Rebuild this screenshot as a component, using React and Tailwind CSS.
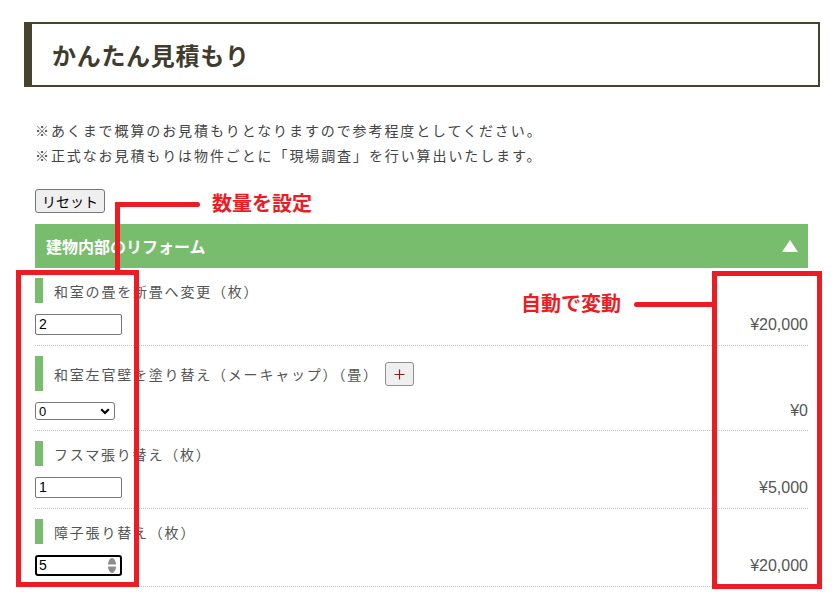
import React from "react";

function Item({ label, control, price, plus }) {
  return (
    <div className="pt-[10px] pb-[10px] border-b border-dotted border-[#c4c4c4]">
      <div className="min-h-[25px] border-l-[8px] border-[#78bc6e] pl-[11px] flex items-center gap-[6px] text-[14px] leading-[20px] tracking-[1.8px] text-[#555] font-['Noto_Sans_CJK_JP',sans-serif]">
        <span>{label}</span>
        {plus && (
          <button className="mt-[6px] mb-[5px] h-[24px] w-[29px] bg-[#efefef] border border-[#8f8f8f] rounded-[3px] flex items-center justify-center tracking-normal">
            <svg width="11" height="11" viewBox="0 0 11 11">
              <path d="M5.5 0.5V10.5M0.5 5.5H10.5" stroke="#7a2424" strokeWidth="1.2" />
            </svg>
          </button>
        )}
      </div>
      <div className="mt-[11px] flex items-center justify-between">
        {control}
        <span className="text-[16px] leading-none text-[#555] font-['Liberation_Sans',sans-serif]">{price}</span>
      </div>
    </div>
  );
}

function TextBox({ value }) {
  return (
    <input
      type="text"
      defaultValue={value}
      className="block h-[21px] w-[87px] border border-[#767676] rounded-[2px] pl-[3px] text-[14px] text-black bg-white font-['Liberation_Sans',sans-serif] outline-none"
    />
  );
}

export default function App() {
  return (
    <div className="relative w-[835px] h-[592px] overflow-hidden bg-white font-['Liberation_Sans','Noto_Sans_CJK_JP',sans-serif]">
      <div className="pt-[22px] pl-[24px] pr-[15px]">
        <div className="h-[65px] border-2 border-l-[8px] border-[#46432f] flex items-center pl-[20px]">
          <h1 className="text-[24px] font-bold leading-none tracking-[0.7px] text-[#3f3c2e] font-['Noto_Sans_CJK_JP',sans-serif]">
            かんたん見積もり
          </h1>
        </div>
        <div className="ml-[11px] mr-[12px]">
          <div className="mt-[31px] text-[14px] leading-[25px] tracking-[1.9px] text-[#444] font-['Noto_Sans_CJK_JP',sans-serif]">
            <p>※あくまで概算のお見積もりとなりますので参考程度としてください。</p>
            <p>※正式なお見積もりは物件ごとに「現場調査」を行い算出いたします。</p>
          </div>
          <button className="block mt-[21px] h-[24px] w-[70px] bg-[#efefef] border border-[#767676] rounded-[3px] text-[14px] text-black font-['Noto_Sans_CJK_JP',sans-serif] leading-none">
            リセット
          </button>
          <div className="mt-[11px] h-[44px] bg-[#78bc6e] flex items-center justify-between pl-[11px] pr-[10px]">
            <span className="text-white font-bold text-[16px] leading-none font-['Noto_Sans_CJK_JP',sans-serif]">
              建物内部のリフォーム
            </span>
            <svg width="16" height="12" viewBox="0 0 16 12">
              <polygon points="8,0 16,12 0,12" fill="#ffffff" />
            </svg>
          </div>

          <Item label="和室の畳を新畳へ変更（枚）" control={<TextBox value="2" />} price="¥20,000" />
          <Item
            label="和室左官壁を塗り替え（メーキャップ）（畳）"
            plus
            control={
              <div className="relative h-[18px] w-[80px]">
                <select
                  defaultValue="0"
                  className="appearance-none block h-[18px] w-[80px] border border-[#767676] rounded-[3px] pl-[3px] text-[13px] leading-none text-black bg-white font-['Liberation_Sans',sans-serif] outline-none"
                >
                  <option value="0">0</option>
                  <option value="1">1</option>
                  <option value="2">2</option>
                </select>
                <svg className="absolute right-[5px] top-[6px] pointer-events-none" width="10" height="7" viewBox="0 0 10 7">
                  <path d="M1.2 1.2L5 5L8.8 1.2" fill="none" stroke="#000" strokeWidth="2.2" />
                </svg>
              </div>
            }
            price="¥0"
          />
          <Item label="フスマ張り替え（枚）" control={<TextBox value="1" />} price="¥5,000" />
          <Item
            label="障子張り替え（枚）"
            control={
              <div className="relative h-[21px] w-[87px]">
                <input
                  type="text"
                  defaultValue="5"
                  className="block h-[21px] w-[87px] border-2 border-black rounded-[3px] pl-[2px] text-[14px] text-black bg-white font-['Liberation_Sans',sans-serif] outline-none"
                />
                <svg className="absolute right-[5px] top-[2px] pointer-events-none" width="10" height="17" viewBox="0 0 10 17">
                  <path d="M1 7.5C1 4 3 1 5 1C7 1 9 4 9 7.5Z" fill="#8d8d8d" />
                  <path d="M1 9.5C1 13 3 16 5 16C7 16 9 13 9 9.5Z" fill="#8d8d8d" />
                </svg>
              </div>
            }
            price="¥20,000"
          />
        </div>
      </div>

      {/* annotations (overlay) */}
      <div className="absolute left-[16px] top-[270px] w-[123px] h-[317px] border-[5px] border-[#ed1c24]" />
      <div className="absolute left-[115px] top-[202px] w-[5px] h-[70px] bg-[#ed1c24]" />
      <div className="absolute left-[115px] top-[202px] w-[85px] h-[5px] bg-[#ed1c24] rounded-r-full" />
      <div className="absolute left-[212px] top-[191px] text-[20px] leading-[24px] font-bold text-[#ed1c24] font-['Noto_Sans_CJK_JP',sans-serif]">
        数量を設定
      </div>

      <div className="absolute left-[712px] top-[271px] w-[110px] h-[318px] border-[5px] border-[#ed1c24]" />
      <div className="absolute left-[634px] top-[302px] w-[80px] h-[5px] bg-[#ed1c24] rounded-l-full" />
      <div className="absolute left-[521px] top-[291px] text-[20px] leading-[24px] font-bold text-[#ed1c24] font-['Noto_Sans_CJK_JP',sans-serif]">
        自動で変動
      </div>
    </div>
  );
}
